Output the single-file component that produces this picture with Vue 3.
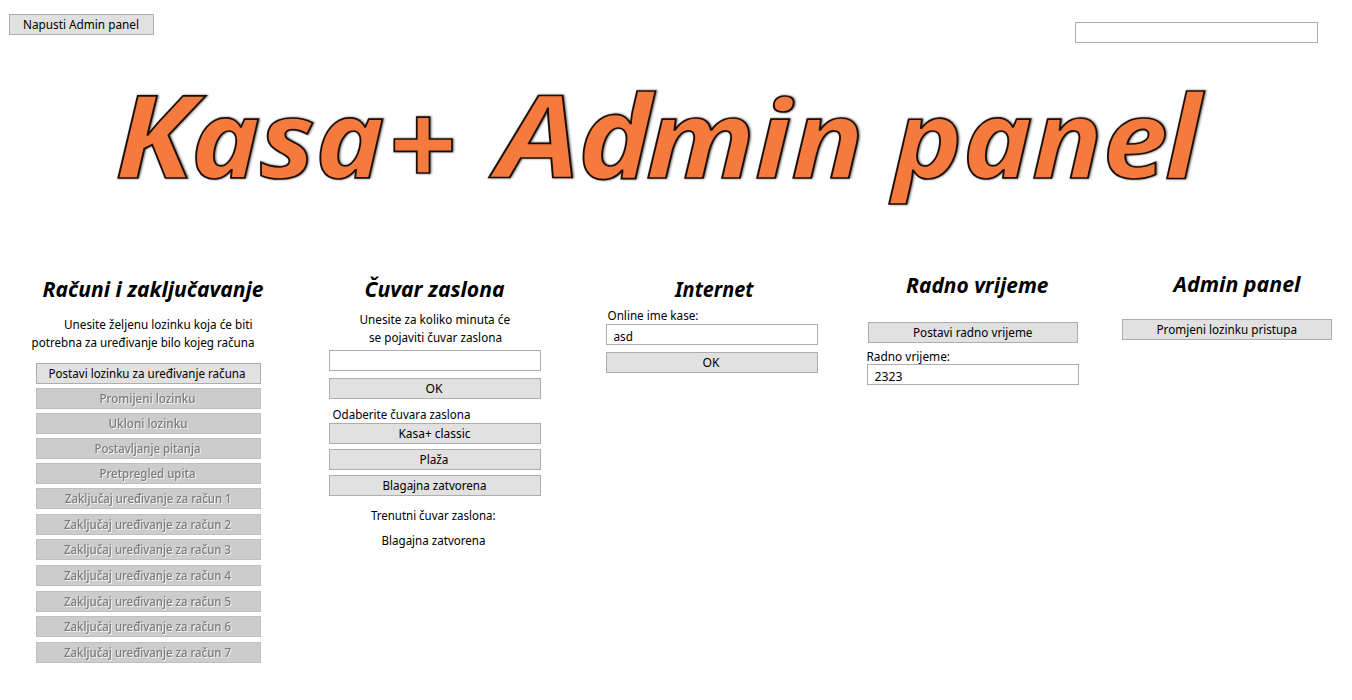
<script setup>
import { h } from 'vue'

// One line of text set to an exact measure: x is the offset in the parent, w the set width.
const Line = (props) =>
  h('svg', { width: '100%', height: props.big ? 36 : 17 }, [
    h('text', { x: props.x, y: props.big ? 27 : 13, textLength: props.w, lengthAdjust: 'spacingAndGlyphs' }, props.t),
  ])
Line.props = { x: Number, w: Number, t: String, big: Boolean }

const accountButtons = [
  { t: 'Postavi lozinku za uređivanje računa', x: 11.5, w: 197, on: true },
  { t: 'Promijeni lozinku', x: 62.5, w: 96 },
  { t: 'Ukloni lozinku', x: 71.5, w: 79 },
  { t: 'Postavljanje pitanja', x: 57.5, w: 106 },
  { t: 'Pretpregled upita', x: 62.5, w: 96 },
  { t: 'Zaključaj uređivanje za račun 1', x: 28, w: 166.5 },
  ...[2, 3, 4, 5, 6, 7].map((n) => ({ t: `Zaključaj uređivanje za račun ${n}`, x: 27, w: 167 })),
]

const savers = [
  { t: 'Kasa+ classic', x: 68.5, w: 72 },
  { t: 'Plaža', x: 89.5, w: 29 },
  { t: 'Blagajna zatvorena', x: 52.5, w: 104 },
]

const banner = [
  [
    { t: 'K', x: 115, w: 79, s: 115 },
    { t: 'asa', x: 191, w: 193, s: 107 },
    { t: '+', x: 388, w: 68, s: 115, y: 126 },
  ],
  [
    { t: 'A', x: 497, w: 83, s: 115 },
    { t: 'd', x: 578, w: 74, s: 115 },
    { t: 'min', x: 646, w: 218, s: 107 },
  ],
  [
    { t: 'pane', x: 893, w: 275, s: 107 },
    { t: 'l', x: 1165, w: 36, s: 115 },
  ],
]
</script>

<template>
  <main class="page">
    <header class="top">
      <button class="btn leave"><Line t="Napusti Admin panel" :x="13" :w="116" /></button>
      <div class="field search"></div>
    </header>

    <svg class="banner" width="1352" height="160">
      <text v-for="(word, i) in banner" :key="i"><tspan v-for="r in word" :key="r.t" :x="r.x" :y="r.y || 118" :font-size="r.s" :textLength="r.w" lengthAdjust="spacingAndGlyphs">{{ r.t }}</tspan></text>
    </svg>

    <div class="columns">
      <section class="col accounts">
        <Line class="title" big t="Računi i zaključavanje" :x="6.5" :w="221" />
        <div class="para">
          <Line t="Unesite željenu lozinku koja će biti" :x="28" :w="188.5" />
          <Line t="potrebna za uređivanje bilo kojeg računa" :x="-4.5" :w="223" />
        </div>
        <div class="stack">
          <button v-for="b in accountButtons" :key="b.t" class="btn" :class="{ off: !b.on }">
            <Line :t="b.t" :x="b.x" :w="b.w" />
          </button>
        </div>
      </section>

      <section class="col saver">
        <Line class="title" big t="Čuvar zaslona" :x="35.5" :w="140" />
        <div class="para">
          <Line t="Unesite za koliko minuta će" :x="30.5" :w="150.5" />
          <Line t="se pojaviti čuvar zaslona" :x="40" :w="133" />
        </div>
        <div class="field"></div>
        <button class="btn ok"><Line t="OK" :x="95.5" :w="17" /></button>
        <Line class="pick" t="Odaberite čuvara zaslona" :x="3.5" :w="138" />
        <div class="savers">
          <button v-for="s in savers" :key="s.t" class="btn"><Line :t="s.t" :x="s.x" :w="s.w" /></button>
        </div>
        <div class="current">
          <Line t="Trenutni čuvar zaslona:" :x="42" :w="124.5" />
          <Line t="Blagajna zatvorena" :x="52.5" :w="104" />
        </div>
      </section>

      <section class="col internet">
        <Line class="title" big t="Internet" :x="69" :w="78.5" />
        <Line class="label" t="Online ime kase:" :x="1.5" :w="91" />
        <div class="field"><Line t="asd" :x="6.5" :w="19.5" /></div>
        <button class="btn ok"><Line t="OK" :x="95.5" :w="17" /></button>
      </section>

      <section class="col hours">
        <Line class="title" big t="Radno vrijeme" :x="38" :w="142.5" />
        <button class="btn"><Line t="Postavi radno vrijeme" :x="44" :w="119.5" /></button>
        <Line class="label" t="Radno vrijeme:" :x="-1.5" :w="83.5" />
        <div class="field"><Line t="2323" :x="6.5" :w="28" /></div>
      </section>

      <section class="col admin">
        <Line class="title" big t="Admin panel" :x="51.5" :w="127" />
        <button class="btn"><Line t="Promjeni lozinku pristupa" :x="33.5" :w="140.5" /></button>
      </section>
    </div>
  </main>
</template>

<style>
body {
  background: #fff;
}
</style>

<style scoped>
.page {
  width: 1352px;
  height: 700px;
  overflow: hidden;
  font-family: 'Noto Sans', 'Open Sans', sans-serif;
  font-size: 12px;
  color: #000;
}
svg {
  display: block;
  overflow: visible;
  fill: currentColor;
}
.top {
  display: flex;
  justify-content: space-between;
  align-items: flex-start;
  height: 60px;
  box-sizing: border-box;
  padding: 14px 34px 0 9px;
}
.btn {
  display: block;
  box-sizing: border-box;
  width: 100%;
  height: 21px;
  margin: 0;
  padding: 0;
  border: 1px solid #adadad;
  border-radius: 0;
  background: #e1e1e1;
  color: #000;
  font: inherit;
  text-align: left;
}
.off {
  border-color: #bfbfbf;
  background: #ccc;
  color: #7c7c7c;
  font-weight: 500;
}
.off svg {
  filter: drop-shadow(1px 1px 0 #f4f4f4);
}
.field {
  box-sizing: border-box;
  height: 21px;
  padding-top: 3px;
  border: 1px solid #abadb3;
  background: #fff;
}
.leave {
  width: 145px;
}
.search {
  width: 243px;
  margin-top: 8px;
}
.banner {
  font-weight: 700;
  font-style: italic;
  fill: #f47a3d;
  stroke: #1c0e06;
  stroke-width: 1.7px;
  filter: blur(0.6px) drop-shadow(1px 0.5px 1px rgba(0, 0, 0, 0.6));
}
.columns {
  display: grid;
  grid-template-columns: 293px 277px 262px 254px 210px;
  align-items: start;
  padding: 45px 0 0 36px;
}
.col {
  padding-top: 5px;
}
.accounts {
  width: 225px;
}
.saver,
.internet {
  width: 212px;
}
.hours,
.admin {
  width: 210px;
}
.title {
  font-size: 21.3px;
  font-weight: 700;
  font-style: italic;
}
.para {
  display: grid;
  row-gap: 1px;
}
.accounts .para {
  margin: 10px 0 12px;
}
.saver .para {
  margin: 5px 0 4px;
}
.stack {
  display: flex;
  flex-direction: column;
  gap: 4px;
}
.stack .btn:nth-child(7),
.stack .btn:nth-child(9),
.stack .btn:nth-child(10),
.stack .btn:nth-child(12) {
  margin-top: 1px;
}
.ok,
.pick {
  margin-top: 7px;
}
.savers {
  display: grid;
  row-gap: 5px;
}
.current {
  display: grid;
  row-gap: 8px;
  margin-top: 11px;
}
.internet .label {
  margin-top: 1px;
}
.hours {
  padding-top: 1px;
}
.hours .btn {
  margin-top: 20px;
}
.hours .label {
  margin: 5px 0 -1px;
}
.hours .field {
  margin: 0 -1px;
}
.admin {
  padding-top: 0;
}
.admin .btn {
  margin-top: 18px;
}
</style>
